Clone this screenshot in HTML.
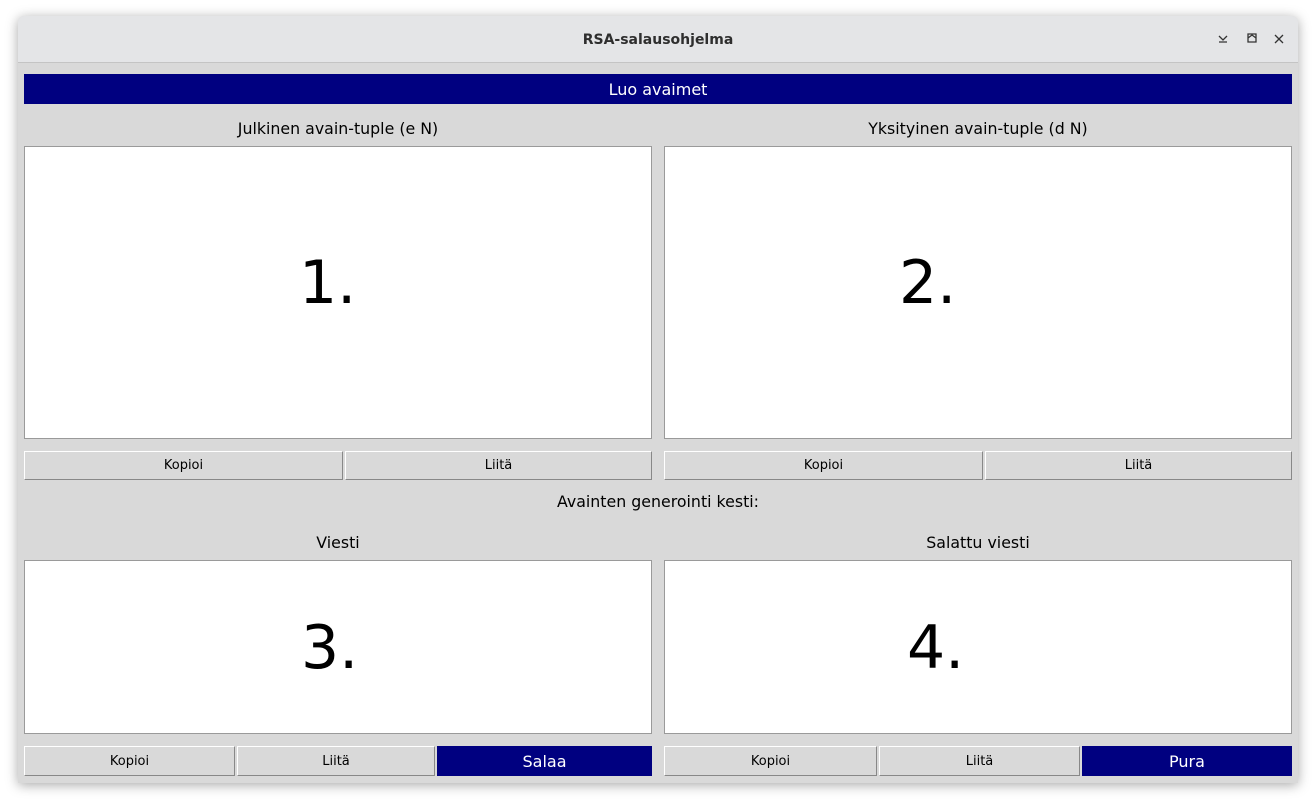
<!DOCTYPE html>
<html><head><meta charset="utf-8"><style>
body{margin:0;width:1316px;height:803px;background:#fff;position:relative;overflow:hidden;font-family:"DejaVu Sans","Liberation Sans",sans-serif}
.win{position:absolute;left:18px;top:16px;width:1280px;height:767px;background:#d9d9d9;box-shadow:0 2px 12px rgba(0,0,0,.35);border-radius:6px 6px 0 0;overflow:hidden}
.tb{position:absolute;left:0;top:0;width:1280px;height:46px;background:#e4e5e7;border-bottom:1px solid #c4c4c4;text-align:center;line-height:48px;font-weight:bold;font-size:14px;color:#2e2e2e}
.a{position:absolute;box-sizing:border-box}
.blue{background:#000080;color:#fff;text-align:center}
.box{background:#fff;border:1px solid #9a9a9a;color:#000;font-size:60px}
.box span{position:absolute}
.btn{background:#d9d9d9;border:1px solid;border-color:#fff #888 #888 #fff;text-align:center;font-size:13px;color:#000;line-height:27px}
.lbl{text-align:center;font-size:15.8px;color:#000}
</style></head><body>
<div class="win">
<div class="tb">RSA-salausohjelma</div>
<svg class="a" style="left:1198px;top:16px" width="72" height="14" viewBox="0 0 72 14" fill="none" stroke="#333" stroke-width="1.3">
<path d="M3 4l4 4 4-4M3 10h8"/>
<path d="M32 2h8v8h-8zM32 6l4-3 4 3"/>
<path d="M59 3l8 8M67 3l-8 8"/>
</svg>
</div>
<div class="a blue" style="left:24px;top:74px;width:1268px;height:30px;line-height:31px;font-size:16px">Luo avaimet</div>
<div class="a lbl" style="left:24px;top:119px;width:628px">Julkinen avain-tuple (e N)</div>
<div class="a lbl" style="left:664px;top:119px;width:628px">Yksityinen avain-tuple (d N)</div>
<div class="a box" style="left:24px;top:146px;width:628px;height:293px"><span style="left:274px;top:101px">1.</span></div>
<div class="a box" style="left:664px;top:146px;width:628px;height:293px"><span style="left:234px;top:101px">2.</span></div>
<div class="a btn" style="left:24px;top:451px;width:319px;height:29px">Kopioi</div>
<div class="a btn" style="left:345px;top:451px;width:307px;height:29px">Liitä</div>
<div class="a btn" style="left:664px;top:451px;width:319px;height:29px">Kopioi</div>
<div class="a btn" style="left:985px;top:451px;width:307px;height:29px">Liitä</div>
<div class="a lbl" style="left:24px;top:492px;width:1268px">Avainten generointi kesti:</div>
<div class="a lbl" style="left:24px;top:533px;width:628px">Viesti</div>
<div class="a lbl" style="left:664px;top:533px;width:628px">Salattu viesti</div>
<div class="a box" style="left:24px;top:560px;width:628px;height:174px"><span style="left:276px;top:52px">3.</span></div>
<div class="a box" style="left:664px;top:560px;width:628px;height:174px"><span style="left:242px;top:52px">4.</span></div>
<div class="a btn" style="left:24px;top:746px;width:211px;height:30px;line-height:29px">Kopioi</div>
<div class="a btn" style="left:237px;top:746px;width:198px;height:30px;line-height:29px">Liitä</div>
<div class="a blue" style="left:437px;top:746px;width:215px;height:30px;line-height:31px;font-size:16px">Salaa</div>
<div class="a btn" style="left:664px;top:746px;width:213px;height:30px;line-height:29px">Kopioi</div>
<div class="a btn" style="left:879px;top:746px;width:201px;height:30px;line-height:29px">Liitä</div>
<div class="a blue" style="left:1082px;top:746px;width:210px;height:30px;line-height:31px;font-size:16px">Pura</div>
</body></html>
